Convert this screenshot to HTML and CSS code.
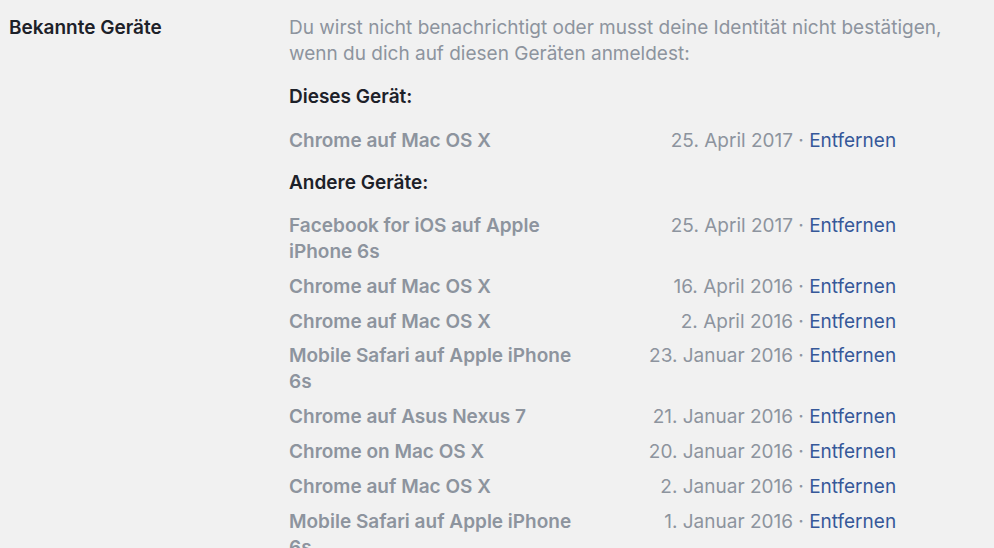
FILE: index.html
```html
<!DOCTYPE html>
<html lang="de">
<head>
    <meta charset="UTF-8">
    <title>Bekannte Geräte</title>
    <link rel="stylesheet" href="styles.css">
</head>
<body>
<div class="section">
    <div class="label">Bekannte Geräte</div>
    <div class="content">
        <p class="desc">Du wirst nicht benachrichtigt oder musst deine Identität nicht bestätigen, wenn du dich auf diesen Geräten anmeldest:</p>
        <h3 class="group first">Dieses Gerät:</h3>
        <ul class="devices">
            <li><span class="name">Chrome auf Mac OS X</span><span class="date">25. April 2017</span><span class="act"> · <a href="#">Entfernen</a></span></li>
        </ul>
        <h3 class="group">Andere Geräte:</h3>
        <ul class="devices">
            <li><span class="name">Facebook for iOS auf Apple iPhone 6s</span><span class="date">25. April 2017</span><span class="act"> · <a href="#">Entfernen</a></span></li>
            <li><span class="name">Chrome auf Mac OS X</span><span class="date">16. April 2016</span><span class="act"> · <a href="#">Entfernen</a></span></li>
            <li><span class="name">Chrome auf Mac OS X</span><span class="date">2. April 2016</span><span class="act"> · <a href="#">Entfernen</a></span></li>
            <li><span class="name">Mobile Safari auf Apple iPhone 6s</span><span class="date">23. Januar 2016</span><span class="act"> · <a href="#">Entfernen</a></span></li>
            <li><span class="name">Chrome auf Asus Nexus 7</span><span class="date">21. Januar 2016</span><span class="act"> · <a href="#">Entfernen</a></span></li>
            <li><span class="name">Chrome on Mac OS X</span><span class="date">20. Januar 2016</span><span class="act"> · <a href="#">Entfernen</a></span></li>
            <li><span class="name">Chrome auf Mac OS X</span><span class="date">2. Januar 2016</span><span class="act"> · <a href="#">Entfernen</a></span></li>
            <li><span class="name">Mobile Safari auf Apple iPhone 6s</span><span class="date">1. Januar 2016</span><span class="act"> · <a href="#">Entfernen</a></span></li>
        </ul>
    </div>
</div>
</body>
</html>
```

FILE: styles.css
```css
*{
    margin: 0;
    padding: 0;
}
body{
    background: #f1f1f1;
    font-family: Inter, "Liberation Sans", sans-serif;
    font-size: 19px;
    line-height: 26px;
    color: #1d2129;
    overflow: hidden;
}
li{
    list-style: none;
}
.section{
    display: grid;
    grid-template-columns: 280px 1fr;
    padding: 15px 0 0 9px;
}
.label{
    font-weight: 600;
}
.content{
    width: 660px;
}
.desc{
    color: #8d949e;
}
.group{
    font-size: 19px;
    font-weight: 600;
    margin: 16px 0 17px;
}
.group.first{
    margin: 17px 0 18px;
}
.devices li{
    display: grid;
    grid-template-columns: 300px 204px auto;
    margin-bottom: 8.8px;
}
.name{
    color: #8d949e;
    font-weight: 600;
}
.date{
    color: #8d949e;
    text-align: right;
}
.act{
    color: #8d949e;
    white-space: pre;
}
.act a{
    color: #365899;
    text-decoration: none;
}
```
